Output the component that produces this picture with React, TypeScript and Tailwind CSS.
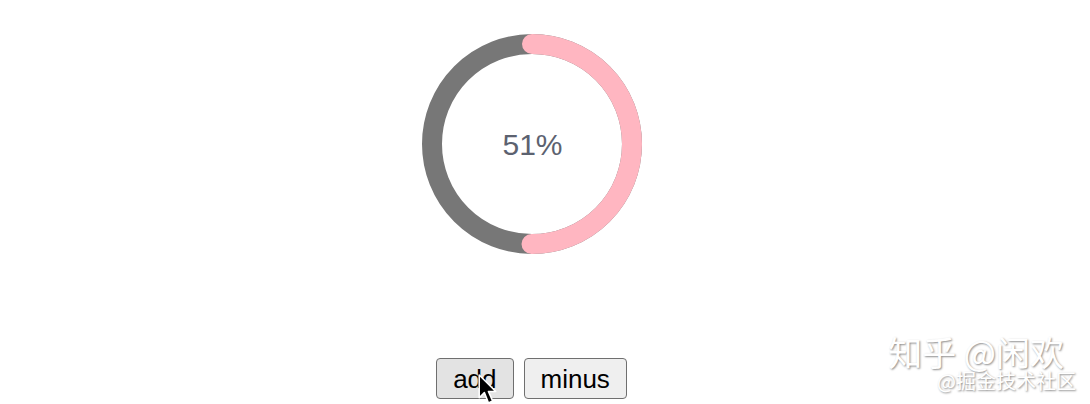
import React from 'react';

const percent = 51;

const Ring = () => {
  const r = 100;
  const c = 2 * Math.PI * r;
  // arc drawn a little behind the label, as in the capture
  const arc = (c * (percent - 1)) / 100;
  return (
    <div className="relative h-[220px] w-[220px]">
      <svg width="220" height="220" viewBox="0 0 220 220" className="block">
        <circle cx="110" cy="110" r={r} fill="none" stroke="#777777" strokeWidth="20" />
        <circle
          cx="110"
          cy="110"
          r={r}
          fill="none"
          stroke="#ffb6c1"
          strokeWidth="20"
          strokeLinecap="round"
          strokeDasharray={`${arc} ${c}`}
          transform="rotate(-90 110 110)"
        />
      </svg>
      <div className="absolute inset-0 flex items-center justify-center pl-[1px] text-[30px] text-[#5c6270] font-['Liberation_Sans',sans-serif]">
        {percent}%
      </div>
    </div>
  );
};

const Cursor = () => (
  <svg
    width="21"
    height="31"
    viewBox="0 0 20 30"
    className="pointer-events-none absolute left-[42px] top-[16px]"
  >
    <path
      d="M1 1 L1 23 L6 18 L10 28 L14 26 L10 17 L17 17 Z"
      fill="#000"
      stroke="#fff"
      strokeWidth="1.5"
      strokeLinejoin="round"
    />
  </svg>
);

export default function App() {
  return (
    <div className="relative h-[404px] w-[1090px] overflow-hidden bg-white font-['Liberation_Sans',sans-serif]">
      <div className="ml-[422px] flex w-[220px] flex-col items-center pt-[34px]">
        <Ring />
        <div className="mt-[104px] flex gap-[10px] pr-[1px]">
          <div className="relative">
            <button className="h-[41px] rounded-[4px] border border-[#6f6f6f] bg-[#e3e3e3] px-[16px] text-[26px] leading-none text-black">
              add
            </button>
            <Cursor />
          </div>
          <button className="h-[41px] rounded-[4px] border border-[#6f6f6f] bg-[#efefef] px-[16px] text-[26px] leading-none text-black">
            minus
          </button>
        </div>
      </div>
      <div className="absolute right-[14px] top-[335px] flex flex-col items-end font-['Noto_Sans_CJK_SC',sans-serif] text-white">
        <div className="mr-[12px] text-[34px] leading-[34px] [text-shadow:1px_1px_2px_rgba(0,0,0,0.45)]">知乎 @闲欢</div>
        <div className="mt-[1px] text-[20px] leading-[22px] [text-shadow:1px_1px_2px_rgba(0,0,0,0.45)]">@掘金技术社区</div>
      </div>
    </div>
  );
}
